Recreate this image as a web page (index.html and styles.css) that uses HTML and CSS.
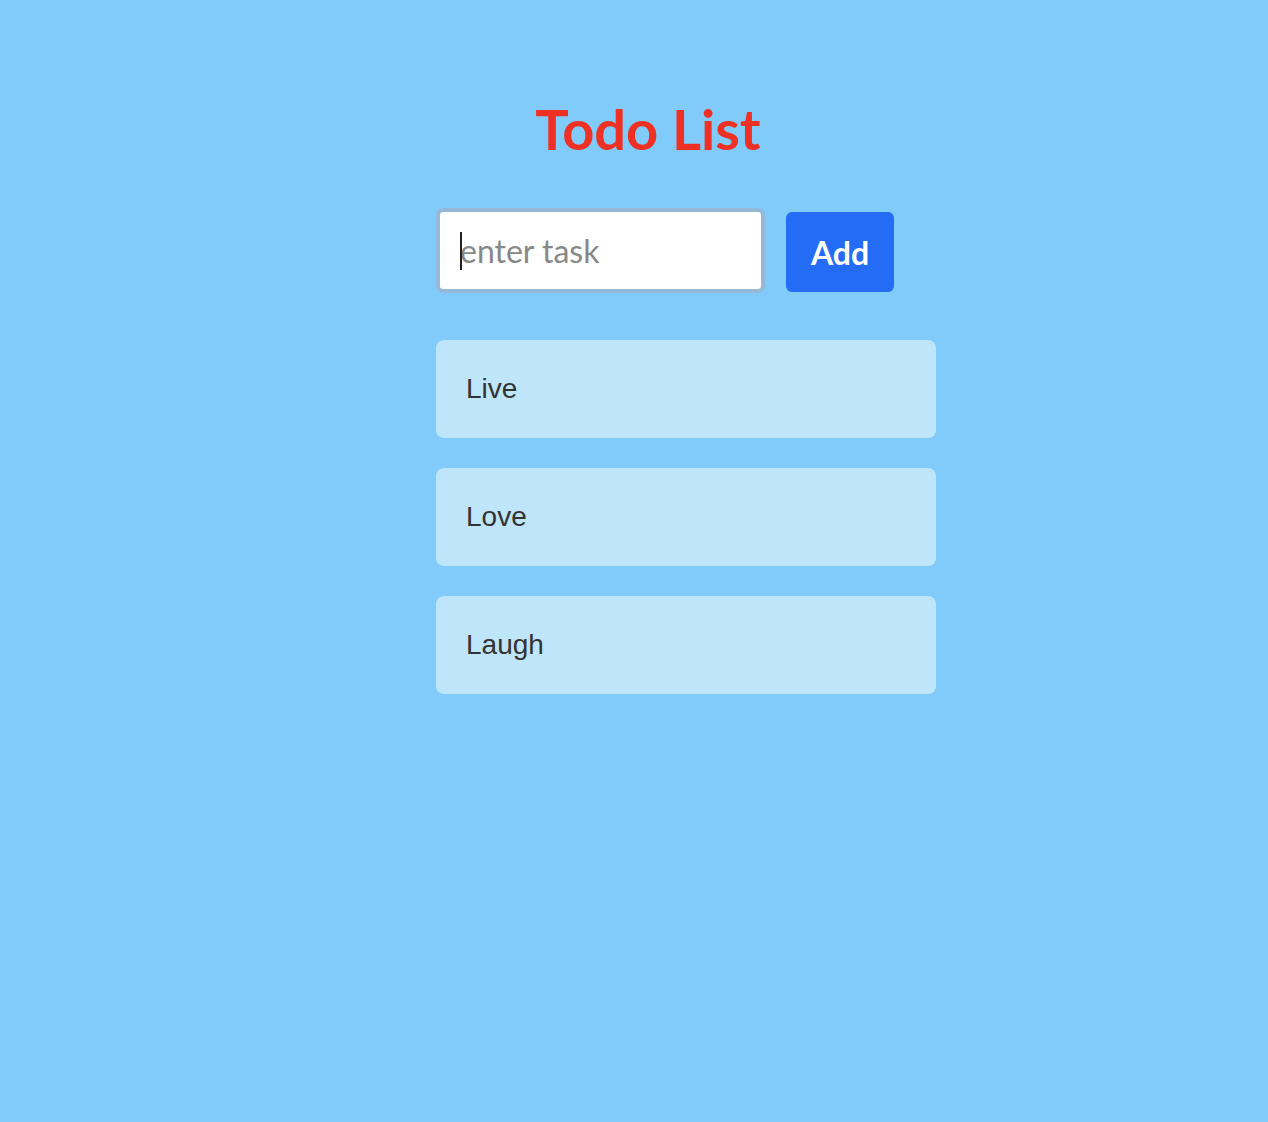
FILE: index.html
```html
<!DOCTYPE html>
<html>
<head>
<meta charset="utf-8">
<link rel="stylesheet" href="styles.css">
</head>
<body>
<h1 class="title">Todo List</h1>
<div class="app">
  <form class="add-form">
    <div class="input-wrap"><span class="caret"></span><input class="task-input" type="text" placeholder="enter task"></div>
    <button class="add-btn" type="button">Add</button>
  </form>
  <ul class="list">
    <li class="item">Live</li>
    <li class="item">Love</li>
    <li class="item">Laugh</li>
  </ul>
</div>
</body>
</html>
```
FILE: styles.css
```css
html, body {
  margin: 0;
  padding: 0;
  background: #80cbf9;
  height: 100%;
}
body {
  font-family: Lato, "Liberation Sans", sans-serif;
}
.title {
  margin: 0;
  padding: 91px 0 0 28px;
  text-align: center;
  font-family: Lato, sans-serif;
  font-weight: 700;
  font-size: 56px;
  line-height: 76px;
  color: #ee3124;
}
.app {
  width: 500px;
  margin: 0 0 0 436px;
}
.add-form {
  display: flex;
  align-items: flex-start;
  gap: 21px;
  margin-top: 41px;
}
.input-wrap {
  position: relative;
  width: 329px;
  height: 85px;
  border: 4px solid #94b9d8;
  border-radius: 7px;
  background: #fff;
  box-sizing: border-box;
}
.task-input {
  width: 100%;
  height: 100%;
  box-sizing: border-box;
  border: none;
  outline: none;
  background: transparent;
  padding: 0 0 0 20px;
  font-family: Lato, sans-serif;
  font-size: 32px;
  color: #333;
  border-radius: 4px;
}
.task-input::placeholder {
  color: #888;
}
.caret {
  position: absolute;
  left: 20px;
  top: 20px;
  width: 2px;
  height: 38px;
  background: #222;
}
.add-btn {
  width: 108px;
  height: 80px;
  margin-top: 4px;
  border: none;
  border-radius: 6px;
  background: #246bf6;
  color: #fff;
  font-family: Lato, sans-serif;
  font-weight: 700;
  font-size: 32px;
  padding: 0;
}
.list {
  list-style: none;
  margin: 47px 0 0;
  padding: 0;
  display: flex;
  flex-direction: column;
  gap: 30px;
}
.item {
  height: 98px;
  box-sizing: border-box;
  display: flex;
  align-items: center;
  padding-left: 30px;
  background: #bfe5fb;
  border-radius: 8px;
  font-family: "Liberation Sans", Arial, sans-serif;
  font-size: 28px;
  color: #333;
}
```
